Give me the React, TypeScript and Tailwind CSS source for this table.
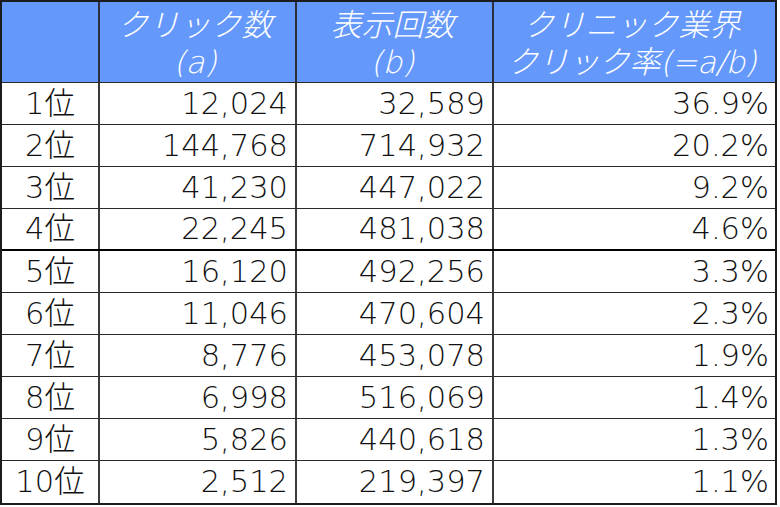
const rows = [
  { rank: "1位", clicks: "12,024", views: "32,589", rate: "36.9%" },
  { rank: "2位", clicks: "144,768", views: "714,932", rate: "20.2%" },
  { rank: "3位", clicks: "41,230", views: "447,022", rate: "9.2%" },
  { rank: "4位", clicks: "22,245", views: "481,038", rate: "4.6%" },
  { rank: "5位", clicks: "16,120", views: "492,256", rate: "3.3%" },
  { rank: "6位", clicks: "11,046", views: "470,604", rate: "2.3%" },
  { rank: "7位", clicks: "8,776", views: "453,078", rate: "1.9%" },
  { rank: "8位", clicks: "6,998", views: "516,069", rate: "1.4%" },
  { rank: "9位", clicks: "5,826", views: "440,618", rate: "1.3%" },
  { rank: "10位", clicks: "2,512", views: "219,397", rate: "1.1%" },
];

const font = "font-['DejaVu_Sans','Noto_Sans_CJK_JP',sans-serif]";

function HeadLine({ children, className = "" }: { children: React.ReactNode; className?: string }) {
  return (
    <span className="block">
      <span className={`inline-block -skew-x-[14deg] ${className}`}>{children}</span>
    </span>
  );
}

export default function App() {
  return (
    <div className="w-[780px] h-[507px] bg-white">
      <div className={`w-[777px] h-[505px] border-2 border-[#1c1c1c] flex flex-col ${font}`}>
        {/* header */}
        <div className="flex h-[81px] bg-[#6598fb] border-b border-[#2a2a2a] text-white font-light text-[31px] leading-[37px] text-center">
          <div className="w-[98px] border-r-2 border-[#2e2e3a]" />
          <div className="w-[197px] border-r-2 border-[#2e2e3a] flex flex-col justify-center pt-[4px]">
            <HeadLine>クリック数</HeadLine>
            <HeadLine>(a)</HeadLine>
          </div>
          <div className="w-[197px] border-r-2 border-[#2e2e3a] flex flex-col justify-center pt-[4px]">
            <HeadLine>表示回数</HeadLine>
            <HeadLine>(b)</HeadLine>
          </div>
          <div className="flex-1 flex flex-col justify-center pt-[4px]">
            <HeadLine>クリニック業界</HeadLine>
            <HeadLine className="tracking-[-0.5px]">クリック率(=a/b)</HeadLine>
          </div>
        </div>

        {/* body */}
        {rows.map((r, i) => (
          <div
            key={r.rank}
            className={`flex h-[42px] text-[30.5px] font-light text-[#111] ${
              i === 3 ? "border-b-2 border-black" : i === rows.length - 1 ? "" : "border-b border-[#2a2a2a]"
            }`}
          >
            <div className="w-[98px] border-r-2 border-[#3a3a3a] flex items-center justify-center">{r.rank}</div>
            <div className="w-[197px] border-r-2 border-[#3a3a3a] flex items-center justify-end pr-[7px]">{r.clicks}</div>
            <div className="w-[197px] border-r-2 border-[#3a3a3a] flex items-center justify-end pr-[7px]">{r.views}</div>
            <div className="flex-1 flex items-center justify-end pr-[6px]">{r.rate}</div>
          </div>
        ))}
      </div>
    </div>
  );
}
